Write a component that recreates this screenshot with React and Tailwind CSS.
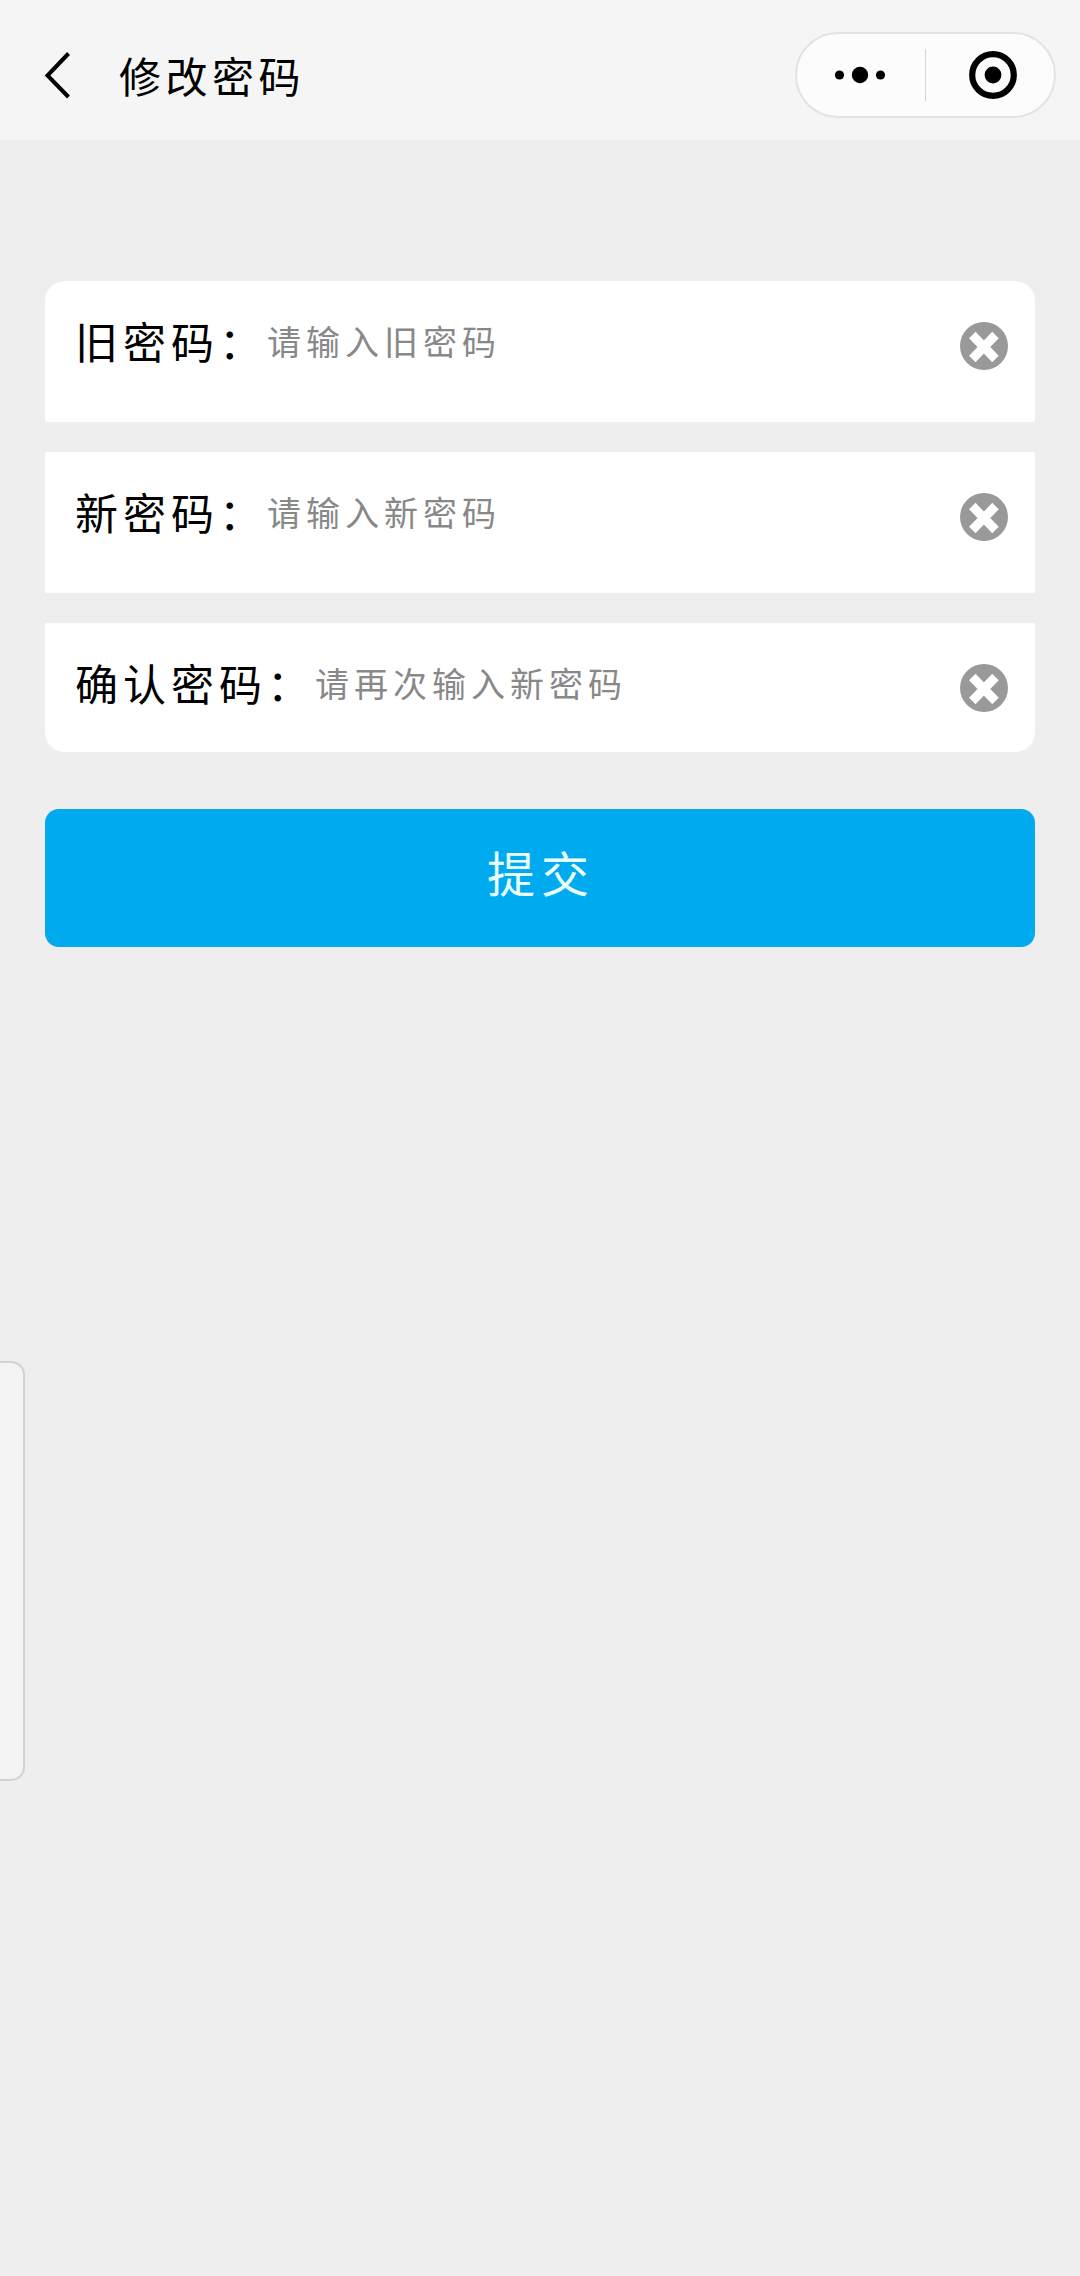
import React from 'react';

const fields = [
    { id: 'old', label: '旧密码：', placeholder: '请输入旧密码', box: 'h-[141px] rounded-t-[20px] rounded-b-[2px]' },
    { id: 'new', label: '新密码：', placeholder: '请输入新密码', box: 'h-[141px] rounded-[2px]' },
    { id: 'confirm', label: '确认密码：', placeholder: '请再次输入新密码', box: 'h-[129px] rounded-t-[2px] rounded-b-[20px]' }
];

const BackIcon = () => (
    <svg width="28" height="48" viewBox="0 0 28 48" fill="none" stroke="#000" strokeWidth="4">
        <path d="M24.5 2.5L3.5 24.5L24.5 46" />
    </svg>
);

const ClearIcon = () => (
    <svg width="48" height="48" viewBox="0 0 48 48">
        <circle cx="24" cy="24" r="24" fill="#999" />
        <path d="M12.3 13L35.5 37M35.5 13L12.3 37" stroke="#fff" strokeWidth="9" />
    </svg>
);

const Capsule = () => (
    <div className="flex h-[86px] w-[261px] items-center rounded-full border-2 border-[#e3e3e3] bg-[#fcfcfc]">
        <button className="flex w-32 justify-center pr-0.5">
            <svg width="52" height="20" viewBox="0 0 52 20">
                <circle cx="5.5" cy="10" r="4.6" />
                <circle cx="26" cy="10" r="8.2" />
                <circle cx="46.5" cy="10" r="4.6" />
            </svg>
        </button>
        <div className="h-[52px] w-px bg-[#d6d6d6]" />
        <button className="flex flex-1 justify-center pl-1.5">
            <svg width="48" height="48" viewBox="0 0 48 48">
                <circle cx="24" cy="24" r="20.8" fill="none" stroke="#000" strokeWidth="6.2" />
                <circle cx="24" cy="24" r="8.4" />
            </svg>
        </button>
    </div>
);

const Field = ({ label, placeholder, box }) => (
    <div className={`flex items-start bg-white pt-[41px] pr-[27px] pl-[30px] ${box}`}>
        <label className="-mt-1 text-[43px] leading-[44px] tracking-[5px] text-black">{label}</label>
        <span className="-mt-0.5 flex-1 text-[34px] leading-[41px] tracking-[5px] text-[#888]">{placeholder}</span>
        <button>
            <ClearIcon />
        </button>
    </div>
);

const App = () => {
    return (
        <div className="relative h-[2276px] w-full overflow-hidden bg-[#eee] font-['Noto_Sans_CJK_SC',sans-serif] font-normal">
            {/* Header */}
            <header className="flex h-[140px] items-center bg-[#f5f5f5] pt-2.5 pr-6 pl-11">
                <button>
                    <BackIcon />
                </button>
                <h1 className="ml-[47px] flex-1 text-[42px] leading-[48px] tracking-[4.5px] text-black">修改密码</h1>
                <Capsule />
            </header>

            {/* Form */}
            <main className="px-[45px] pt-[141px]">
                <div className="flex flex-col gap-[30px]">
                    {fields.map(field => (
                        <Field key={field.id} {...field} />
                    ))}
                </div>
                <button className="mt-[57px] flex h-[138px] w-full items-center justify-center rounded-[14px] bg-[#00aaef] pb-3.5 pl-0.5 text-[48px] tracking-[6px] text-[#eaffff]">
                    提交
                </button>
            </main>

            {/* Side drawer handle */}
            <div className="absolute top-[1361px] left-0 h-[420px] w-[25px] rounded-r-[14px] border-2 border-l-0 border-[#d2d2d2] bg-[#f3f3f3]" />
        </div>
    );
};

export default App;
